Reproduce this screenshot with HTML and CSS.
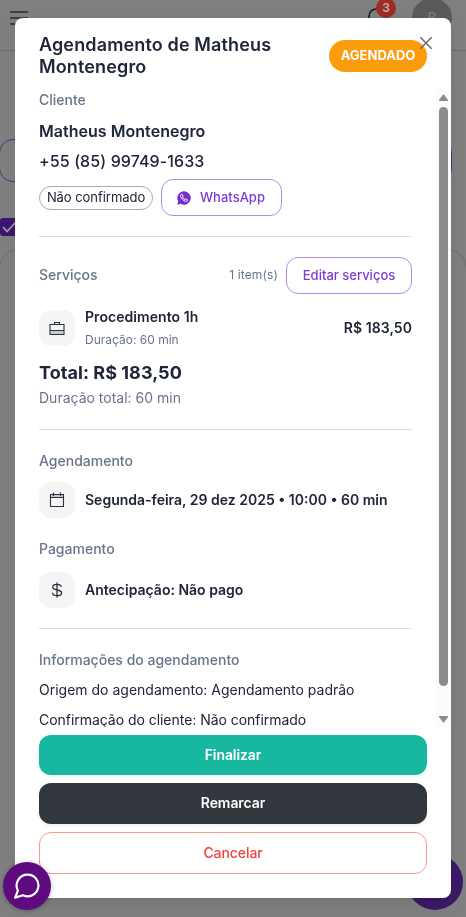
FILE: index.html
```html
<!DOCTYPE html>
<html lang="pt-BR">
<head>
<meta charset="utf-8">
<title>Agendamento</title>
<link rel="stylesheet" href="styles.css">
</head>
<body>
<div class="page">
  <header class="topbar">
    <svg class="menu" viewBox="0 0 18 14"><path d="M0 1h18M0 7h18M0 13h18"/></svg>
    <div class="topbar-right">
      <div class="bell">
        <svg viewBox="0 0 20 22"><path d="M1 22V9C1 4 4 1 9 1h1c6 0 9 4 9 10v11"/></svg>
        <span class="count">3</span>
      </div>
      <div class="avatar">B</div>
    </div>
  </header>
  <div class="field"></div>
  <div class="check"><svg viewBox="0 0 18 18"><path d="M3 9l4 4.500 8.500-9"/></svg></div>
  <div class="panel"></div>
</div>
<div class="fab"></div>
<div class="overlay">
  <section class="modal">
    <svg class="close" viewBox="0 0 14 14"><path d="M1.300 1.300l11.400 11.400M12.700 1.300L1.300 12.700"/></svg>
    <div class="head">
      <h1>Agendamento de Matheus Montenegro</h1>
      <span class="status">AGENDADO</span>
    </div>
    <div class="scroller">
      <div class="body">
        <div class="label">Cliente</div>
        <div class="name">Matheus Montenegro</div>
        <div class="phone">+55 (85) 99749-1633</div>
        <div class="contact">
          <span class="chip">Não confirmado</span>
          <button class="outline wa">
            <svg viewBox="0 0 24 24"><path d="M12 .5A11.500 11.500 0 0 0 2 17.700L.5 23.500l5.900-1.500A11.500 11.500 0 1 0 12 .5z" fill="#722ed1"/><path d="M7.500 5.500c-2.500 2-1.300 5.500 1.700 8.600s6.500 5 8.600 2.700c.9-1 .6-1.800-.2-2.200l-1.900-1c-.7-.3-1.100.2-1.800 1-1.800-.6-3.600-2.300-4.400-4.100.7-.7 1.100-1.100.8-1.800l-.8-2.200c-.4-1-1.200-1.500-2-1z" fill="none" stroke="#fff" stroke-width="1.700"/></svg>
            WhatsApp
          </button>
        </div>
        <hr>
        <div class="services-head">
          <span class="label">Serviços</span>
          <span class="items">1 item(s)</span>
          <button class="outline edit">Editar serviços</button>
        </div>
        <div class="row service">
          <span class="tile"><svg viewBox="0 0 16 16"><path class="soft" d="M1.500 11h13v3h-13z"/><path d="M1 4.500h14v10H1zM5.500 4.500v-2h5v2M1 10.500h14"/></svg></span>
          <div class="service-text"><div class="strong">Procedimento 1h</div><div class="small">Duração: 60 min</div></div>
          <span class="strong">R$ 183,50</span>
        </div>
        <div class="total">Total: R$ 183,50</div>
        <div class="duration">Duração total: 60 min</div>
        <hr>
        <div class="label section">Agendamento</div>
        <div class="row">
          <span class="tile"><svg viewBox="0 0 16 16"><path class="soft" d="M2 3h12v2.500H2z"/><path d="M1.500 2.500h13v12h-13zM4.500.5v3.500M11.500.5v3.500M1.500 5.500h13"/></svg></span>
          <span class="strong">Segunda-feira, 29 dez 2025 • 10:00 • 60 min</span>
        </div>
        <div class="label payment">Pagamento</div>
        <div class="row">
          <span class="tile"><svg class="dollar" viewBox="0 0 16 16"><path d="M12.300 4.800C12 3.100 10.500 2.300 8 2.300S3.700 3.400 3.700 5.100c0 4 8.900 1.800 8.900 5.800 0 1.900-1.900 2.800-4.500 2.800s-4.500-1-4.700-3M8 .5v15"/></svg></span>
          <span class="strong">Antecipação: Não pago</span>
        </div>
        <hr>
        <div class="label section info-title">Informações do agendamento</div>
        <div class="info">Origem do agendamento: Agendamento padrão</div>
        <div class="info last">Confirmação do cliente: Não confirmado</div>
      </div>
      <div class="bar">
        <svg viewBox="0 0 9 8"><path d="M4.500 .5L9 6.500v1H0v-1z"/></svg>
        <div class="thumb"></div>
        <svg viewBox="0 0 9 8"><path d="M4.500 7.500L0 1.500v-1h9v1z"/></svg>
      </div>
    </div>
    <div class="actions">
      <button class="finish">Finalizar</button>
      <button class="move">Remarcar</button>
      <button class="cancel">Cancelar</button>
    </div>
  </section>
</div>
<div class="chat"><svg viewBox="0 0 24 24"><path d="M12.500 1.500a10 10 0 1 1-4.300 19L1 22.700l2.600-6.500A10 10 0 0 1 12.500 1.500z"/></svg></div>
</body>
</html>
```

FILE: styles.css
```css
* { box-sizing: border-box; }
body { margin: 0; height: 917px; overflow: hidden; background: #7f7f7f; font-family: Inter, "Liberation Sans", sans-serif; color: #20263a; font-size: 14px; }
button { font: inherit; padding: 0; }
svg { display: block; flex: none; }
.page { height: 917px; overflow: hidden; }
.topbar { height: 51px; border-bottom: 1px solid #6c6c70; display: flex; justify-content: space-between; padding: 0 14px 0 10px; }
.menu { width: 18px; height: 14px; margin-top: 11px; stroke: #404040; stroke-width: 2; }
.topbar-right { display: flex; gap: 24px; }
.bell { position: relative; margin-top: 8px; width: 20px; }
.bell svg { width: 20px; height: 22px; fill: none; stroke: #12162a; stroke-width: 1.6; }
.count { position: absolute; left: 8px; top: -10px; width: 20px; height: 20px; border-radius: 50%; background: #a02b26; color: #b4b4b4; font-size: 12px; font-weight: 600; line-height: 20px; text-align: center; }
.avatar { width: 40px; height: 40px; margin-top: -2px; border-radius: 50%; background: #5a5a5a; color: #7c7c7c; font-size: 14px; font-weight: 600; text-align: center; line-height: 40px; }
.field { width: 453px; height: 43px; margin: 88px 0 0 -1px; border: 1px solid #4f3474; border-radius: 14px; }
.check { width: 18px; height: 18px; margin-top: 36px; background: #3b1770; border-radius: 3px; }
.check svg { width: 18px; height: 18px; fill: none; stroke: #a49baf; stroke-width: 1.8; }
.panel { height: 700px; margin: 13px -1px 0; border: 1px solid #6e6d78; border-radius: 20px; }
.fab { position: fixed; right: 3px; bottom: 7px; width: 56px; height: 56px; border-radius: 50%; background: #3b1967; }
.overlay { position: fixed; inset: 0; padding: 18px 15px 19px; }
.modal { position: relative; height: 880px; background: #fff; border-radius: 8px; box-shadow: 0 6px 16px rgba(0,0,0,.08), 0 3px 6px -4px rgba(0,0,0,.12); }
.close { position: absolute; right: 18px; top: 18px; width: 14px; height: 14px; stroke: #6b6b6b; stroke-width: 1.5; z-index: 1; }
.head { height: 71px; display: flex; justify-content: space-between; padding: 16px 24px 0; }
h1 { margin: 0; width: 250px; font-size: 18px; line-height: 22px; font-weight: 600; letter-spacing: .14px; }
.status { width: 98px; height: 32px; margin-top: 6px; border-radius: 16px; background: #fc9c0d; color: #fff; font-size: 13px; font-weight: 700; line-height: 31px; text-align: center; }
.scroller { height: 638px; display: flex; overflow: hidden; }
.body { flex: 1; padding-left: 24px; margin-right: 24px; }
.label { font-size: 14px; line-height: 22px; font-weight: 500; color: #69748b; }
.name { margin-top: 8px; font-size: 16px; font-weight: 600; line-height: 25px; letter-spacing: .03px; }
.phone { margin-top: 5px; font-size: 16px; line-height: 25px; font-weight: 500; letter-spacing: .1px; }
.contact { display: flex; align-items: center; gap: 8px; margin-top: 5px; }
.chip { width: 114px; height: 24px; border: 1px solid #aaa; border-radius: 12px; font-size: 13px; line-height: 21px; text-align: center; letter-spacing: -.05px; }
.outline { height: 37px; display: flex; align-items: center; justify-content: center; padding-bottom: 1px; background: #fff; border: 1px solid #b58be8; border-radius: 12px; color: #7c3ad6; font-size: 13px; font-weight: 500; }
.wa { width: 121px; gap: 9px; padding-right: 1px; }
.wa svg { width: 14px; height: 14px; margin-top: 1px; }
hr { height: 1px; border: 0; background: #dcdee2; margin: 20px 0; }
.services-head { display: flex; align-items: center; }
.services-head .label { margin-top: -2px; }
.items { margin-left: auto; margin-top: -2px; margin-right: 8px; color: #69748b; font-size: 12px; letter-spacing: .14px; }
.edit { width: 126px; }
.row { display: flex; align-items: center; gap: 10px; height: 36px; }
.service { margin-top: 16px; }
.service .strong { letter-spacing: .06px; }
.service-text { flex: 1; }
.tile { width: 36px; height: 36px; flex: none; display: flex; align-items: center; justify-content: center; border-radius: 12px; background: #f5f5f5; }
.tile svg { width: 16px; height: 16px; fill: none; stroke: #2c3142; stroke-width: 1.1; }
.tile .dollar { stroke-width: 1.3; }
.tile .soft { fill: #c9cad0; stroke: none; }
.strong { font-weight: 600; line-height: 22px; }
.small { font-size: 12px; line-height: 20px; margin-top: 2px; color: #69748b; }
.total { margin-top: 13px; font-size: 18px; font-weight: 700; line-height: 28px; letter-spacing: .05px; }
.duration { line-height: 22px; color: #69748b; }
.section { margin-bottom: 10px; }
.payment { margin: 20px 0 12px; }
.info-title { margin-bottom: 8px; }
.info { line-height: 22px; margin-bottom: 8px; }
.last { letter-spacing: -.04px; }
.bar { width: 15px; background: #fbfbfb; display: flex; flex-direction: column; align-items: center; padding: 4px 0 3px; }
.bar svg { width: 9px; height: 9px; fill: #8b8b8b; }
.thumb { flex: none; width: 9px; height: 579px; margin: 5px 0 29px; border-radius: 5px; background: #8b8b8b; }
.actions { display: flex; flex-direction: column; gap: 8px; padding: 8px 24px 0; }
.actions button { border: 0; border-radius: 12px; padding-bottom: 2px; color: #fff; font-weight: 600; letter-spacing: -.08px; }
.actions .finish { height: 40px; background: #18b7a0; box-shadow: 0 2px 3px rgba(0,0,0,.05); }
.actions .move { height: 41px; background: #32373e; box-shadow: 0 2px 3px rgba(0,0,0,.05); }
.actions .cancel { height: 42px; background: #fff; border: 1px solid #fa9a94; color: #f04438; font-weight: 500; }
.chat { position: fixed; left: 3px; top: 862px; width: 48px; height: 48px; border-radius: 50%; background: #5e0b80; display: flex; align-items: center; justify-content: center; box-shadow: 0 1px 5px rgba(0,0,0,.25); }
.chat svg { width: 26px; height: 26px; fill: none; stroke: #fff; stroke-width: 2; stroke-linejoin: round; }
```
